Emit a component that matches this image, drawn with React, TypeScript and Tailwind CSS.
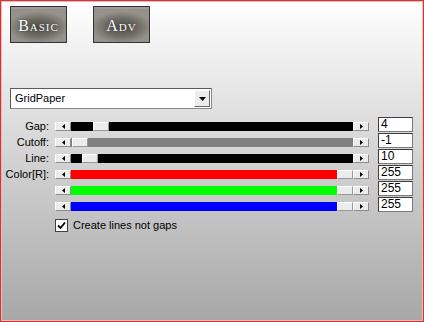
import React from "react";

function Arrow({ dir }: { dir: "left" | "right" }) {
  return (
    <svg width="3" height="5" viewBox="0 0 3 5" className="block">
      {dir === "left" ? (
        <polygon points="3,0 0,2.5 3,5" fill="#000" />
      ) : (
        <polygon points="0,0 3,2.5 0,5" fill="#000" />
      )}
    </svg>
  );
}

function SBtn({ dir }: { dir: "left" | "right" }) {
  return (
    <div className="w-[16px] h-full flex items-center justify-center bg-[#ececec] border-t border-l border-t-white border-l-white border-b border-r border-b-[#8c8c8c] border-r-[#8c8c8c]">
      <Arrow dir={dir} />
    </div>
  );
}

function Thumb() {
  return (
    <div className="w-[16px] h-full shrink-0 bg-[#ececec] border-t border-l border-t-white border-l-white border-b border-r border-b-[#9a9a9a] border-r-[#9a9a9a]" />
  );
}

function Row({
  label,
  value,
  track,
  seg,
}: {
  label: string;
  value: string;
  track: string;
  seg: string;
}) {
  return (
    <div className="flex items-start h-[16px]">
      <div className="w-[48px] text-right leading-[16px] h-[16px] pt-[1px]">{label}</div>
      <div className="ml-[6px] mt-[5px] w-[314px] h-[9px] flex">
        <SBtn dir="left" />
        <div className={`flex-1 flex h-full ${track}`}>
          <div className={seg} />
          <Thumb />
        </div>
        <SBtn dir="right" />
      </div>
      <div className="ml-[9px] w-[35px] h-[15px] bg-white border border-[#7a7a7a] border-t-[#3c3c3c] border-l-[#3c3c3c] pl-[2px] leading-[13px] text-[12px]">
        {value}
      </div>
    </div>
  );
}

function BigBtn({ first, rest }: { first: string; rest: string }) {
  return (
    <div className="w-[57px] h-[37px] border border-[#333] shadow-[inset_0_2px_0_#a6979b] bg-[radial-gradient(ellipse_55%_45%_at_50%_58%,#4f4c46_0%,#6e6b65_55%,#95928c_100%)] flex items-center justify-center">
      <span className="font-['Liberation_Serif'] text-white text-[16px] tracking-[1px] [font-variant:small-caps] [text-shadow:0_0_2px_#333] leading-none pt-[2px]">
        {first}
        {rest}
      </span>
    </div>
  );
}

export default function App() {
  return (
    <div className="w-[424px] h-[322px] border border-[#cc3838] shadow-[inset_0_0_0_1px_#efb6b6] bg-gradient-to-b from-white to-[#a7a7a7] font-['Liberation_Sans'] text-[11px] text-black overflow-hidden">
      <div className="flex gap-[26px] pl-[9px] pt-[5px]">
        <BigBtn first="B" rest="asic" />
        <BigBtn first="A" rest="dv" />
      </div>

      <div className="ml-[9px] mt-[45px] w-[202px] h-[21px] bg-white border border-[#8a8a8a] border-t-[#5a5a5a] border-l-[#5a5a5a] flex items-center">
        <div className="flex-1 pl-[4px] text-[11px] leading-none">GridPaper</div>
        <div className="w-[16px] h-[17px] mr-[1px] bg-[#ececec] border-t border-l border-t-white border-l-white border-b border-r border-b-[#6a6a6a] border-r-[#6a6a6a] flex items-center justify-center">
          <svg width="7" height="4" viewBox="0 0 7 4" className="block">
            <polygon points="0,0 7,0 3.5,4" fill="#000" />
          </svg>
        </div>
      </div>

      <div className="mt-[8px] flex flex-col">
        <Row label="Gap:" value="4" track="bg-black" seg="w-[22px]" />
        <Row label="Cutoff:" value="-1" track="bg-[#808080]" seg="w-[1px]" />
        <Row label="Line:" value="10" track="bg-black" seg="w-[11px]" />
        <Row label="Color[R]:" value="255" track="bg-[#ff0000]" seg="flex-1" />
        <Row label="" value="255" track="bg-[#00ff00]" seg="flex-1" />
        <Row label="" value="255" track="bg-[#0000ff]" seg="flex-1" />
      </div>

      <div className="mt-[6px] ml-[54px] flex items-center">
        <div className="w-[13px] h-[13px] bg-white border border-[#404040] flex items-center justify-center">
          <svg width="9" height="9" viewBox="0 0 9 9" className="block">
            <path d="M1 4.5 L3.5 7 L8 1.5" stroke="#000" strokeWidth="1.8" fill="none" />
          </svg>
        </div>
        <span className="ml-[5px] text-[11px] leading-none">Create lines not gaps</span>
      </div>
    </div>
  );
}
